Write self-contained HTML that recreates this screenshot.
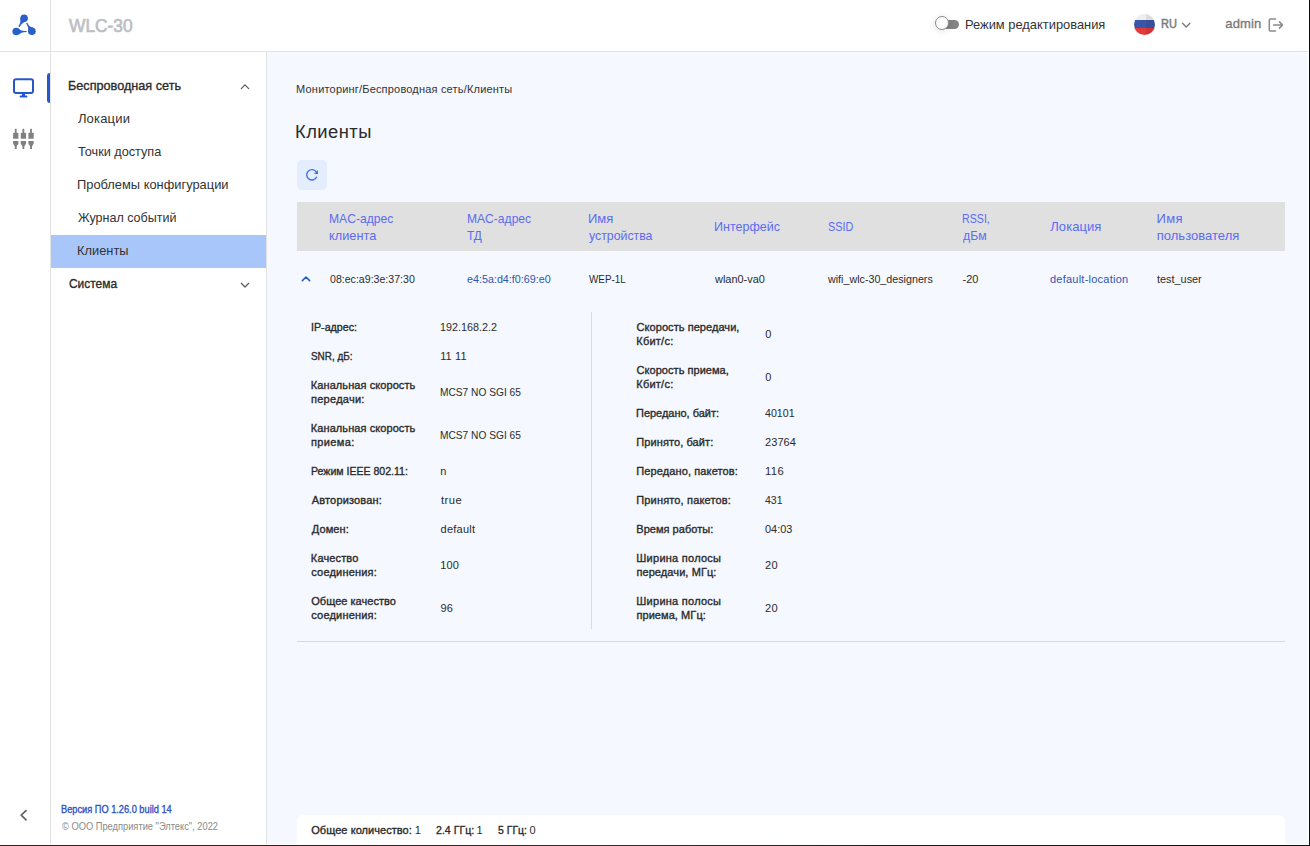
<!DOCTYPE html>
<html lang="ru"><head><meta charset="utf-8"><title>WLC-30</title>
<style>
html,body{margin:0;padding:0;}
body{width:1310px;height:846px;position:relative;overflow:hidden;background:#fff;font-family:"Liberation Sans",sans-serif;}
.a{position:absolute;}
#mainbg{left:267px;top:52px;width:1041px;height:792px;background:#f5f8fe;}
#hline{left:0;top:51px;width:1308px;height:1px;background:#e2e2e2;}
#vline1{left:50px;top:0;width:1px;height:844px;background:#e2e2e2;}
#vline2{left:266px;top:52px;width:1px;height:792px;background:#e2e2e2;}
#actbar{left:47px;top:73px;width:3px;height:30px;background:#2558c9;border-radius:3px 0 0 3px;}
#selbg{left:51px;top:235px;width:215px;height:33px;background:#a9c6fb;}
#rbtn{left:297px;top:160px;width:30px;height:30px;border-radius:5px;background:#e3edfe;}
#thead{left:297px;top:202px;width:988px;height:49px;background:#e0e0e0;}
#divv{left:591px;top:312px;width:1px;height:317px;background:#dcdcdc;}
#divh{left:297px;top:641px;width:988px;height:1px;background:#d9d9d9;}
#fbar{left:297px;top:815px;width:988px;height:30px;background:#fff;border-radius:6px 6px 0 0;}
#bright{left:1309px;top:0;width:1px;height:846px;background:#0b0f12;}
#bbot{left:0;top:845px;width:1310px;height:1px;background:linear-gradient(90deg,#5c0b1b 0,#5c0b1b 250px,#2b1d20 290px,#3a2c2c 600px,#1b1c1e 900px,#0b0f12 1310px);}
#track{left:939px;top:20px;width:20px;height:9px;border-radius:4.5px;background:#838383;}
#thumb{left:935px;top:16px;width:12px;height:12px;border-radius:50%;background:#fff;border:1px solid #8a8a8a;box-shadow:0 1px 7px rgba(0,0,0,.13);}
#flag{left:1134px;top:14px;width:21px;height:21px;border-radius:50%;overflow:hidden;background:linear-gradient(#eeeeee 0,#eeeeee 30%,#3a56a8 30%,#3a56a8 66%,#e2393a 66%,#e2393a 100%);}
#flag i{position:absolute;left:58%;top:0;width:42%;height:100%;background:rgba(0,0,0,.07);}
svg.a{overflow:visible;}


.t{position:absolute;white-space:nowrap;line-height:20px;height:20px;font-family:"Liberation Sans",sans-serif;font-weight:400;transform-origin:0 0;}
.sb{-webkit-text-stroke:0.35px currentColor;}
.sb2{-webkit-text-stroke:0.7px currentColor;}
.sb3{-webkit-text-stroke:0.5px currentColor;}

</style></head><body>
<div class="a" id="mainbg"></div>
<div class="a" id="hline"></div>
<div class="a" id="vline1"></div>
<div class="a" id="vline2"></div>
<div class="a" id="actbar"></div>
<div class="a" id="selbg"></div>
<div class="a" id="rbtn"></div>
<div class="a" id="thead"></div>
<div class="a" id="divv"></div>
<div class="a" id="divh"></div>
<div class="a" id="fbar"></div>
<div class="a" id="track"></div>
<div class="a" id="thumb"></div>
<div class="a" id="flag"><i></i></div>
<svg class="a" style="left:0;top:0" width="1310" height="846" viewBox="0 0 1310 846">
  <!-- logo -->
  <g fill="#2a5fcb">
    <circle cx="24.1" cy="18.2" r="3.8"/>
    <circle cx="16.2" cy="31.5" r="3.8"/>
    <circle cx="31.9" cy="31.3" r="3.8"/>
    <path d="M20.3 18.6 C20.7 21.8 20.3 23.8 18.2 26.3 L19.7 27.1 C20.8 24.4 22 22.9 25.6 21.4 Z"/>
    <path d="M18.2 28.2 C20 30.4 23 31.1 26.7 31.1 L26.7 31.9 C23.4 31.8 21.4 32.4 19 34.4 Z"/>
    <path d="M33 27.6 C30.2 27 28.2 25.2 27.4 22.7 L26 23.4 C27.9 25.6 28.6 27.8 28.1 31.4 Z"/>
  </g>
  <!-- monitor -->
  <g fill="none" stroke="#2558c9" stroke-width="2">
    <rect x="14" y="79.2" width="19" height="13.8" rx="2"/>
  </g>
  <rect x="22" y="93.5" width="3" height="2.5" fill="#2558c9"/>
  <rect x="19.6" y="95.5" width="7.8" height="2.1" rx="1" fill="#2558c9"/>
  <!-- sliders/plugs -->
  <g fill="#808080">
    <g><rect x="14.8" y="128.8" width="1.8" height="5"/><path d="M13.1 133.6 Q13.1 132.7 14 132.7 H17.5 Q18.4 132.7 18.4 133.6 V138.8 H13.1 Z"/><path d="M13.1 141 H18.4 V143.8 L16.7 146.2 V149.1 H14.8 V146.2 L13.1 143.8 Z"/></g>
    <g transform="translate(7.65 0)"><rect x="14.8" y="128.8" width="1.8" height="5"/><path d="M13.1 133.6 Q13.1 132.7 14 132.7 H17.5 Q18.4 132.7 18.4 133.6 V138.8 H13.1 Z"/><path d="M13.1 141 H18.4 V143.8 L16.7 146.2 V149.1 H14.8 V146.2 L13.1 143.8 Z"/></g>
    <g transform="translate(15.3 0)"><rect x="14.8" y="128.8" width="1.8" height="5"/><path d="M13.1 133.6 Q13.1 132.7 14 132.7 H17.5 Q18.4 132.7 18.4 133.6 V138.8 H13.1 Z"/><path d="M13.1 141 H18.4 V143.8 L16.7 146.2 V149.1 H14.8 V146.2 L13.1 143.8 Z"/></g>
  </g>
  <!-- sidebar chevrons -->
  <g fill="none" stroke="#5a5a5a" stroke-width="1.25" stroke-linecap="round" stroke-linejoin="round">
    <path d="M241.3 88.6 L245 84.9 L248.7 88.6"/>
    <path d="M241.3 283.3 L245 287 L248.7 283.3"/>
  </g>
  <!-- collapse chevron -->
  <path d="M26 810.6 L21.2 815.2 L26 819.8" fill="none" stroke="#666" stroke-width="1.8" stroke-linecap="round" stroke-linejoin="round"/>
  <!-- row chevron -->
  <path d="M302.4 280.6 L306 277 L309.6 280.6" fill="none" stroke="#2a5cc8" stroke-width="1.6" stroke-linecap="round" stroke-linejoin="round"/>
  <!-- refresh -->
  <path d="M316.72 176.75 A5.2 5.2 0 1 1 316.21 171.89" fill="none" stroke="#3f75e0" stroke-width="1.4"/>
  <path d="M318 170 V174 H313.9 Z" fill="#3f75e0"/>
  <!-- lang chevron -->
  <path d="M1182.5 23.3 L1186.2 27 L1189.9 23.3" fill="none" stroke="#777" stroke-width="1.3" stroke-linecap="round" stroke-linejoin="round"/>
  <!-- logout -->
  <g fill="none" stroke="#8a8a8a" stroke-width="1.5" stroke-linecap="round" stroke-linejoin="round">
    <path d="M1275.5 19 H1270.6 Q1269.3 19 1269.3 20.3 V29.7 Q1269.3 31 1270.6 31 H1275.5"/>
    <path d="M1273.6 25 H1282.6 M1279.5 21.9 L1282.6 25 L1279.5 28.1"/>
  </g>
</svg>
<div class="a" id="bright"></div>
<div class="a" id="bbot"></div>

<span id="t0" class="t sb2" style="left:69.46px;top:16.05px;font-size:18px;color:#bdbfc4;transform:scaleX(0.9646)">WLC-30</span>
<span id="t1" class="t" style="left:964.54px;top:14.70px;font-size:13px;color:#333333;transform:scaleX(0.9907)">Режим редактирования</span>
<span id="t2" class="t sb3" style="left:1161.31px;top:13.70px;font-size:13px;color:#7a7a7a;transform:scaleX(0.8482)">RU</span>
<span id="t3" class="t sb" style="left:1225.22px;top:13.70px;font-size:13px;color:#7a7a7a;letter-spacing:0.181px">admin</span>
<span id="t4" class="t sb" style="left:68.33px;top:75.70px;font-size:13px;color:#2b2b2b;transform:scaleX(0.9731)">Беспроводная сеть</span>
<span id="t5" class="t" style="left:77.89px;top:108.70px;font-size:13px;color:#333333;letter-spacing:0.180px">Локации</span>
<span id="t6" class="t" style="left:77.72px;top:141.70px;font-size:13px;color:#333333;transform:scaleX(0.9753)">Точки доступа</span>
<span id="t7" class="t" style="left:77.36px;top:174.70px;font-size:13px;color:#333333;transform:scaleX(0.9897)">Проблемы конфигурации</span>
<span id="t8" class="t" style="left:77.83px;top:207.70px;font-size:13px;color:#333333;transform:scaleX(0.9632)">Журнал событий</span>
<span id="t9" class="t" style="left:77.35px;top:240.70px;font-size:13px;color:#333333;transform:scaleX(0.9886)">Клиенты</span>
<span id="t10" class="t sb" style="left:68.75px;top:273.70px;font-size:13px;color:#2b2b2b;transform:scaleX(0.9184)">Система</span>
<span id="t11" class="t sb" style="left:61.40px;top:799.70px;font-size:10px;color:#2f55c4;transform:scaleX(0.9230)">Версия ПО 1.26.0 build 14</span>
<span id="t12" class="t" style="left:61.86px;top:816.70px;font-size:10px;color:#8a8a8a;transform:scaleX(0.9298)">© ООО Предприятие "Элтекс", 2022</span>
<span id="t13" class="t" style="left:296.10px;top:79.36px;font-size:11px;color:#333333;letter-spacing:0.188px">Мониторинг/Беспроводная сеть/Клиенты</span>
<span id="t14" class="t" style="left:295.49px;top:122.05px;font-size:18px;color:#2b2b2b;letter-spacing:0.450px;transform:scaleX(1.0199)">Клиенты</span>
<span id="t15" class="t" style="left:329.01px;top:208.70px;font-size:13px;color:#5b6cf2;transform:scaleX(0.9321)">MAC-адрес</span>
<span id="t16" class="t" style="left:329.14px;top:225.70px;font-size:13px;color:#5b6cf2;transform:scaleX(0.9817)">клиента</span>
<span id="t17" class="t" style="left:466.61px;top:208.70px;font-size:13px;color:#5b6cf2;transform:scaleX(0.9291)">MAC-адрес</span>
<span id="t18" class="t" style="left:467.33px;top:225.70px;font-size:13px;color:#5b6cf2;transform:scaleX(0.9117)">ТД</span>
<span id="t19" class="t" style="left:587.93px;top:208.70px;font-size:13px;color:#5b6cf2;letter-spacing:0.020px">Имя</span>
<span id="t20" class="t" style="left:588.97px;top:225.70px;font-size:13px;color:#5b6cf2;transform:scaleX(0.9469)">устройства</span>
<span id="t21" class="t" style="left:713.97px;top:216.70px;font-size:13px;color:#5b6cf2;transform:scaleX(0.9631)">Интерфейс</span>
<span id="t22" class="t" style="left:827.51px;top:216.70px;font-size:13px;color:#5b6cf2;transform:scaleX(0.8376)">SSID</span>
<span id="t23" class="t" style="left:962.13px;top:208.70px;font-size:13px;color:#5b6cf2;transform:scaleX(0.8193)">RSSI,</span>
<span id="t24" class="t" style="left:962.88px;top:225.70px;font-size:13px;color:#5b6cf2;transform:scaleX(0.9401)">дБм</span>
<span id="t25" class="t" style="left:1050.29px;top:216.70px;font-size:13px;color:#5b6cf2;letter-spacing:0.049px">Локация</span>
<span id="t26" class="t" style="left:1156.53px;top:208.70px;font-size:13px;color:#5b6cf2;letter-spacing:0.320px">Имя</span>
<span id="t27" class="t" style="left:1156.70px;top:225.70px;font-size:13px;color:#5b6cf2;letter-spacing:0.025px">пользователя</span>
<span id="t28" class="t" style="left:329.59px;top:269.36px;font-size:11px;color:#2b2b2b;transform:scaleX(0.9631)">08:ec:a9:3e:37:30</span>
<span id="t29" class="t" style="left:467.14px;top:269.36px;font-size:11px;color:#2c55b8;transform:scaleX(0.9771)">e4:5a:d4:f0:69:e0</span>
<span id="t30" class="t" style="left:588.96px;top:269.36px;font-size:11px;color:#2b2b2b;transform:scaleX(0.8975)">WEP-1L</span>
<span id="t31" class="t" style="left:715.02px;top:269.36px;font-size:11px;color:#2b2b2b;transform:scaleX(0.9934)">wlan0-va0</span>
<span id="t32" class="t" style="left:828.02px;top:269.36px;font-size:11px;color:#2b2b2b;transform:scaleX(0.9736)">wifi_wlc-30_designers</span>
<span id="t33" class="t" style="left:962.51px;top:269.36px;font-size:11px;color:#2b2b2b;letter-spacing:0.006px">-20</span>
<span id="t34" class="t" style="left:1049.94px;top:269.36px;font-size:11px;color:#2c55b8;letter-spacing:0.238px">default-location</span>
<span id="t35" class="t" style="left:1157.44px;top:269.36px;font-size:11px;color:#2b2b2b;transform:scaleX(0.9888)">test_user</span>
<span id="t36" class="t sb" style="left:310.78px;top:317.36px;font-size:11px;color:#2b2b2b;transform:scaleX(0.9711)">IP-адрес:</span>
<span id="t37" class="t" style="left:440.18px;top:317.36px;font-size:11px;color:#2b2b2b;transform:scaleX(0.9800)">192.168.2.2</span>
<span id="t38" class="t sb" style="left:311.31px;top:346.36px;font-size:11px;color:#2b2b2b;transform:scaleX(0.9002)">SNR, дБ:</span>
<span id="t39" class="t" style="left:440.16px;top:346.36px;font-size:11px;color:#2b2b2b;letter-spacing:0.117px">11 11</span>
<span id="t40" class="t sb" style="left:310.87px;top:375.36px;font-size:11px;color:#2b2b2b;letter-spacing:0.074px">Канальная скорость</span>
<span id="t41" class="t sb" style="left:311.01px;top:389.36px;font-size:11px;color:#2b2b2b;letter-spacing:0.265px">передачи:</span>
<span id="t42" class="t" style="left:440.17px;top:382.36px;font-size:11px;color:#2b2b2b;transform:scaleX(0.9250)">MCS7 NO SGI 65</span>
<span id="t43" class="t sb" style="left:310.87px;top:418.36px;font-size:11px;color:#2b2b2b;letter-spacing:0.074px">Канальная скорость</span>
<span id="t44" class="t sb" style="left:311.01px;top:432.36px;font-size:11px;color:#2b2b2b;letter-spacing:0.356px">приема:</span>
<span id="t45" class="t" style="left:440.17px;top:425.36px;font-size:11px;color:#2b2b2b;transform:scaleX(0.9250)">MCS7 NO SGI 65</span>
<span id="t46" class="t sb" style="left:310.90px;top:461.36px;font-size:11px;color:#2b2b2b;transform:scaleX(0.9595)">Режим IEEE 802.11:</span>
<span id="t47" class="t" style="left:440.27px;top:461.36px;font-size:11px;color:#2b2b2b">n</span>
<span id="t48" class="t sb" style="left:311.75px;top:490.36px;font-size:11px;color:#2b2b2b;letter-spacing:0.166px">Авторизован:</span>
<span id="t49" class="t" style="left:440.83px;top:490.36px;font-size:11px;color:#2b2b2b;letter-spacing:0.450px;transform:scaleX(1.0171)">true</span>
<span id="t50" class="t sb" style="left:311.69px;top:519.36px;font-size:11px;color:#2b2b2b;letter-spacing:0.124px">Домен:</span>
<span id="t51" class="t" style="left:440.54px;top:519.36px;font-size:11px;color:#2b2b2b;letter-spacing:0.252px">default</span>
<span id="t52" class="t sb" style="left:310.87px;top:548.36px;font-size:11px;color:#2b2b2b;letter-spacing:0.128px">Качество</span>
<span id="t53" class="t sb" style="left:311.31px;top:562.36px;font-size:11px;color:#2b2b2b;letter-spacing:0.191px">соединения:</span>
<span id="t54" class="t" style="left:440.16px;top:555.36px;font-size:11px;color:#2b2b2b;letter-spacing:0.154px">100</span>
<span id="t55" class="t sb" style="left:311.25px;top:591.36px;font-size:11px;color:#2b2b2b;letter-spacing:0.031px">Общее качество</span>
<span id="t56" class="t sb" style="left:311.31px;top:605.36px;font-size:11px;color:#2b2b2b;letter-spacing:0.191px">соединения:</span>
<span id="t57" class="t" style="left:440.48px;top:598.36px;font-size:11px;color:#2b2b2b;letter-spacing:0.149px">96</span>
<span id="t58" class="t sb" style="left:636.62px;top:317.36px;font-size:11px;color:#2b2b2b;letter-spacing:0.055px">Скорость передачи,</span>
<span id="t59" class="t sb" style="left:636.27px;top:331.36px;font-size:11px;color:#2b2b2b;letter-spacing:0.240px">Кбит/с:</span>
<span id="t60" class="t" style="left:765.17px;top:324.36px;font-size:11px;color:#2b2b2b">0</span>
<span id="t61" class="t sb" style="left:636.62px;top:360.36px;font-size:11px;color:#2b2b2b;letter-spacing:0.037px">Скорость приема,</span>
<span id="t62" class="t sb" style="left:636.27px;top:374.36px;font-size:11px;color:#2b2b2b;letter-spacing:0.240px">Кбит/с:</span>
<span id="t63" class="t" style="left:765.17px;top:367.36px;font-size:11px;color:#2b2b2b">0</span>
<span id="t64" class="t sb" style="left:636.29px;top:403.36px;font-size:11px;color:#2b2b2b;transform:scaleX(0.9961)">Передано, байт:</span>
<span id="t65" class="t" style="left:765.36px;top:403.36px;font-size:11px;color:#2b2b2b;transform:scaleX(0.9663)">40101</span>
<span id="t66" class="t sb" style="left:636.28px;top:432.36px;font-size:11px;color:#2b2b2b;letter-spacing:0.092px">Принято, байт:</span>
<span id="t67" class="t" style="left:765.05px;top:432.36px;font-size:11px;color:#2b2b2b;letter-spacing:0.070px">23764</span>
<span id="t68" class="t sb" style="left:636.28px;top:461.36px;font-size:11px;color:#2b2b2b;letter-spacing:0.117px">Передано, пакетов:</span>
<span id="t69" class="t" style="left:764.75px;top:461.36px;font-size:11px;color:#2b2b2b;letter-spacing:0.450px;transform:scaleX(1.0160)">116</span>
<span id="t70" class="t sb" style="left:636.28px;top:490.36px;font-size:11px;color:#2b2b2b;letter-spacing:0.156px">Принято, пакетов:</span>
<span id="t71" class="t" style="left:765.36px;top:490.36px;font-size:11px;color:#2b2b2b;transform:scaleX(0.9562)">431</span>
<span id="t72" class="t sb" style="left:636.27px;top:519.36px;font-size:11px;color:#2b2b2b;letter-spacing:0.033px">Время работы:</span>
<span id="t73" class="t" style="left:765.17px;top:519.36px;font-size:11px;color:#2b2b2b;transform:scaleX(0.9918)">04:03</span>
<span id="t74" class="t sb" style="left:636.27px;top:548.36px;font-size:11px;color:#2b2b2b;letter-spacing:0.256px">Ширина полосы</span>
<span id="t75" class="t sb" style="left:636.41px;top:562.36px;font-size:11px;color:#2b2b2b;letter-spacing:0.091px">передачи, МГц:</span>
<span id="t76" class="t" style="left:765.04px;top:555.36px;font-size:11px;color:#2b2b2b;letter-spacing:0.450px;transform:scaleX(1.0071)">20</span>
<span id="t77" class="t sb" style="left:636.27px;top:591.36px;font-size:11px;color:#2b2b2b;letter-spacing:0.256px">Ширина полосы</span>
<span id="t78" class="t sb" style="left:636.41px;top:605.36px;font-size:11px;color:#2b2b2b;letter-spacing:0.073px">приема, МГц:</span>
<span id="t79" class="t" style="left:765.04px;top:598.36px;font-size:11px;color:#2b2b2b;letter-spacing:0.450px;transform:scaleX(1.0071)">20</span>
<span id="t80" class="t sb" style="left:311.25px;top:820.36px;font-size:11px;color:#2b2b2b;letter-spacing:0.053px">Общее количество:</span>
<span id="t81" class="t" style="left:414.76px;top:820.36px;font-size:11px;color:#2b2b2b">1</span>
<span id="t82" class="t sb" style="left:435.64px;top:820.36px;font-size:11px;color:#2b2b2b;transform:scaleX(0.9631)">2.4 ГГц:</span>
<span id="t83" class="t" style="left:476.56px;top:820.36px;font-size:11px;color:#2b2b2b">1</span>
<span id="t84" class="t sb" style="left:497.75px;top:820.36px;font-size:11px;color:#2b2b2b;transform:scaleX(0.9537)">5 ГГц:</span>
<span id="t85" class="t" style="left:529.57px;top:820.36px;font-size:11px;color:#2b2b2b">0</span>
</body></html>
